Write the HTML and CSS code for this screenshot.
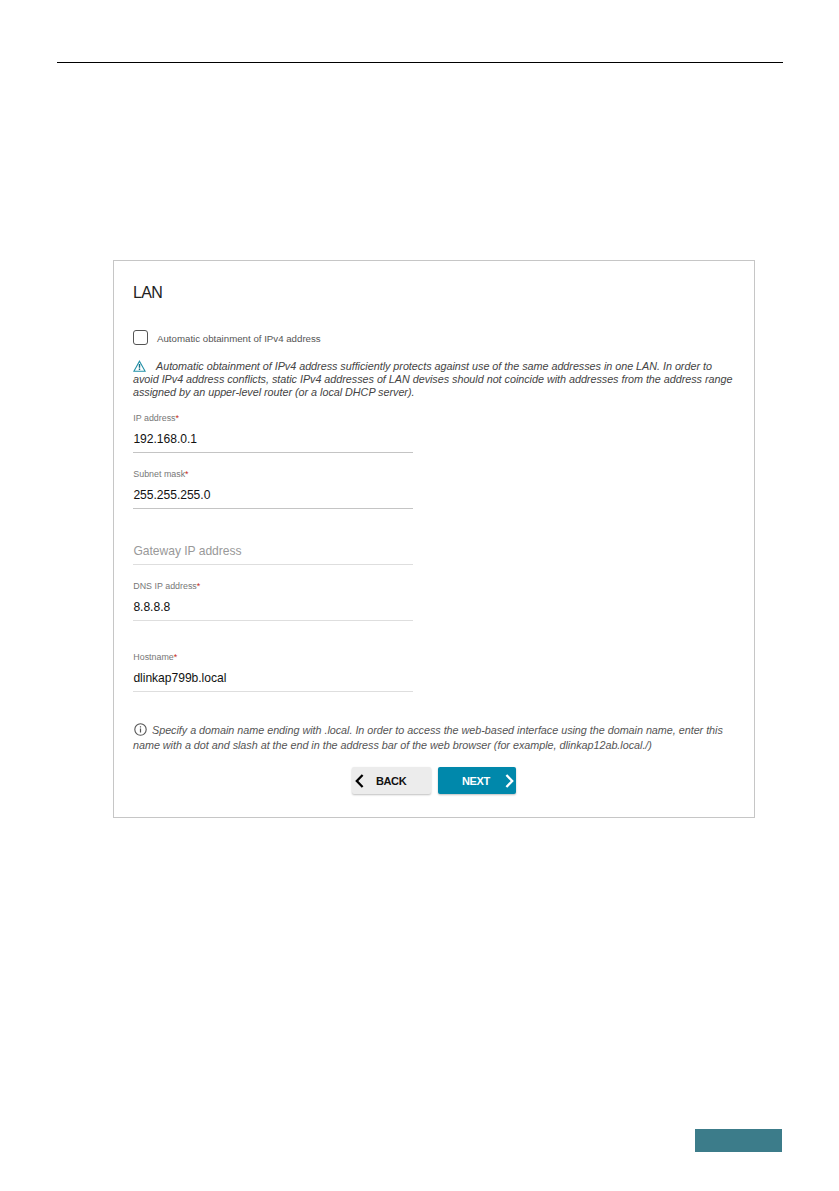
FILE: index.html
```html
<!DOCTYPE html>
<html lang="en">
<head>
<meta charset="utf-8">
<title>LAN</title>
<link rel="stylesheet" href="styles.css">
</head>
<body>
<div class="page">
  <hr class="rule">
  <main class="card">
    <h1 class="title">LAN</h1>
    <label class="check"><span class="box"></span><span class="check-text">Automatic obtainment of IPv4 address</span></label>
    <div class="warning">
      <div class="line"><svg class="tri" width="13" height="12" viewBox="0 0 13 12"><path d="M6.5 1.2 12.1 11.3H.9Z" fill="none" stroke="#2391a8" stroke-width="1.1"/><path d="M6.5 4v3.7M6.5 8.6v1.4" stroke="#176f86" stroke-width="1.4"/></svg><span>Automatic obtainment of IPv4 address sufficiently protects against use of the same addresses in one LAN. In order to</span></div>
      <div class="line"><span>avoid IPv4 address conflicts, static IPv4 addresses of LAN devises should not coincide with addresses from the address range</span></div>
      <div class="line"><span>assigned by an upper-level router (or a local DHCP server).</span></div>
    </div>
    <div class="field"><div class="label"><span>IP address<b>*</b></span></div><div class="value">192.168.0.1</div></div>
    <div class="field"><div class="label"><span>Subnet mask<b>*</b></span></div><div class="value">255.255.255.0</div></div>
    <div class="field light"><div class="label"></div><div class="value placeholder">Gateway IP address</div></div>
    <div class="field light"><div class="label"><span>DNS IP address<b>*</b></span></div><div class="value">8.8.8.8</div></div>
    <div class="field light host"><div class="label"><span>Hostname<b>*</b></span></div><div class="value">dlinkap799b.local</div></div>
    <div class="info">
      <div class="line"><svg class="circle" width="13" height="13" viewBox="0 0 13 13"><circle cx="6.5" cy="6.5" r="5.7" fill="none" stroke="#555" stroke-width="1.1"/><path d="M6.5 3.2v1.2M6.5 5.6v4" stroke="#555" stroke-width="1.2"/></svg><span>Specify a domain name ending with .local. In order to access the web-based interface using the domain name, enter this</span></div>
      <div class="line"><span>name with a dot and slash at the end in the address bar of the web browser (for example, dlinkap12ab.local./)</span></div>
    </div>
    <div class="actions">
      <button class="btn back"><svg width="9" height="14" viewBox="0 0 9 14"><path d="M7.6 1 1.8 7l5.8 6" fill="none" stroke="#000" stroke-width="2.3"/></svg><span>BACK</span></button>
      <button class="btn next"><span>NEXT</span><svg width="9" height="14" viewBox="0 0 9 14"><path d="M1.4 1 7.2 7l-5.8 6" fill="none" stroke="#fff" stroke-width="2.3"/></svg></button>
    </div>
  </main>
  <div class="tab"></div>
</div>
</body>
</html>
```
FILE: styles.css
```css
* { box-sizing: border-box; }
body { margin: 0; background: #fff; font-family: "Liberation Sans", Arial, sans-serif; }
.page { width: 839px; height: 1191px; padding: 62px 56px 39px 57px; display: flex; flex-direction: column; }
.rule { width: 726px; height: 1px; margin: 0; border: 0; background: #000; flex: none; }
.card { width: 642px; height: 558px; margin: 197px 0 0 56px; padding: 0 19px; border: 1px solid #c6c6c6; flex: none; }
.title { margin: 20px 0 0; height: 24px; line-height: 24px; font-size: 16px; font-weight: 400; letter-spacing: -.6px; color: #222; }
.check { display: flex; align-items: center; height: 15px; margin-top: 25px; }
.box { width: 15px; height: 15px; border: 1.5px solid #555; border-radius: 3px; }
.check-text { margin-left: 9px; padding-top: 1px; font-size: 9.7px; color: #555; white-space: nowrap; }
.warning { margin-top: 14px; color: #444; font-size: 10.8px; letter-spacing: -.03px; font-style: italic; }
.line { display: flex; align-items: center; height: 13px; white-space: nowrap; }
.tri { margin-right: 10px; flex: none; }
.field { width: 280px; height: 56px; padding-top: 15px; border-bottom: 1px solid #c4c4c4; }
.warning + .field { height: 55px; padding-top: 14px; }
.light { border-color: #dedede; }
.label { display: flex; align-items: center; height: 12px; padding-left: .3px; font-size: 8.9px; color: #777; }
.label b { font-weight: 400; color: #c62b18; }
.value { display: flex; align-items: center; height: 28px; padding: 2px 0 0 .4px; font-size: 12.1px; letter-spacing: -.03px; color: #111; }
.placeholder { color: #999; }
.field.host { height: 71px; padding-top: 30px; }
.info { margin-top: 30px; color: #555; font-size: 10.8px; letter-spacing: -.03px; font-style: italic; }
.info .line { height: 15px; }
.circle { margin: 0 5px 0 1px; flex: none; }
.actions { display: flex; gap: 7px; margin: 15px 0 0 219px; }
.btn { display: flex; align-items: center; height: 27px; padding: 0; border: 0; border-radius: 2px; font: bold 11px "Liberation Sans", Arial, sans-serif; letter-spacing: -.4px; box-shadow: 0 1px 2px rgba(0, 0, 0, .25); }
.back { width: 79px; padding-left: 3px; background: #ececec; color: #111; }
.back span { margin-left: 12px; }
.next { width: 78px; padding-left: 24px; background: #0088ab; color: #fff; }
.next svg { margin-left: auto; margin-right: 2px; }
.tab { width: 87px; height: 23px; margin: auto 0 0 638px; background: #3c7c8a; }
```
